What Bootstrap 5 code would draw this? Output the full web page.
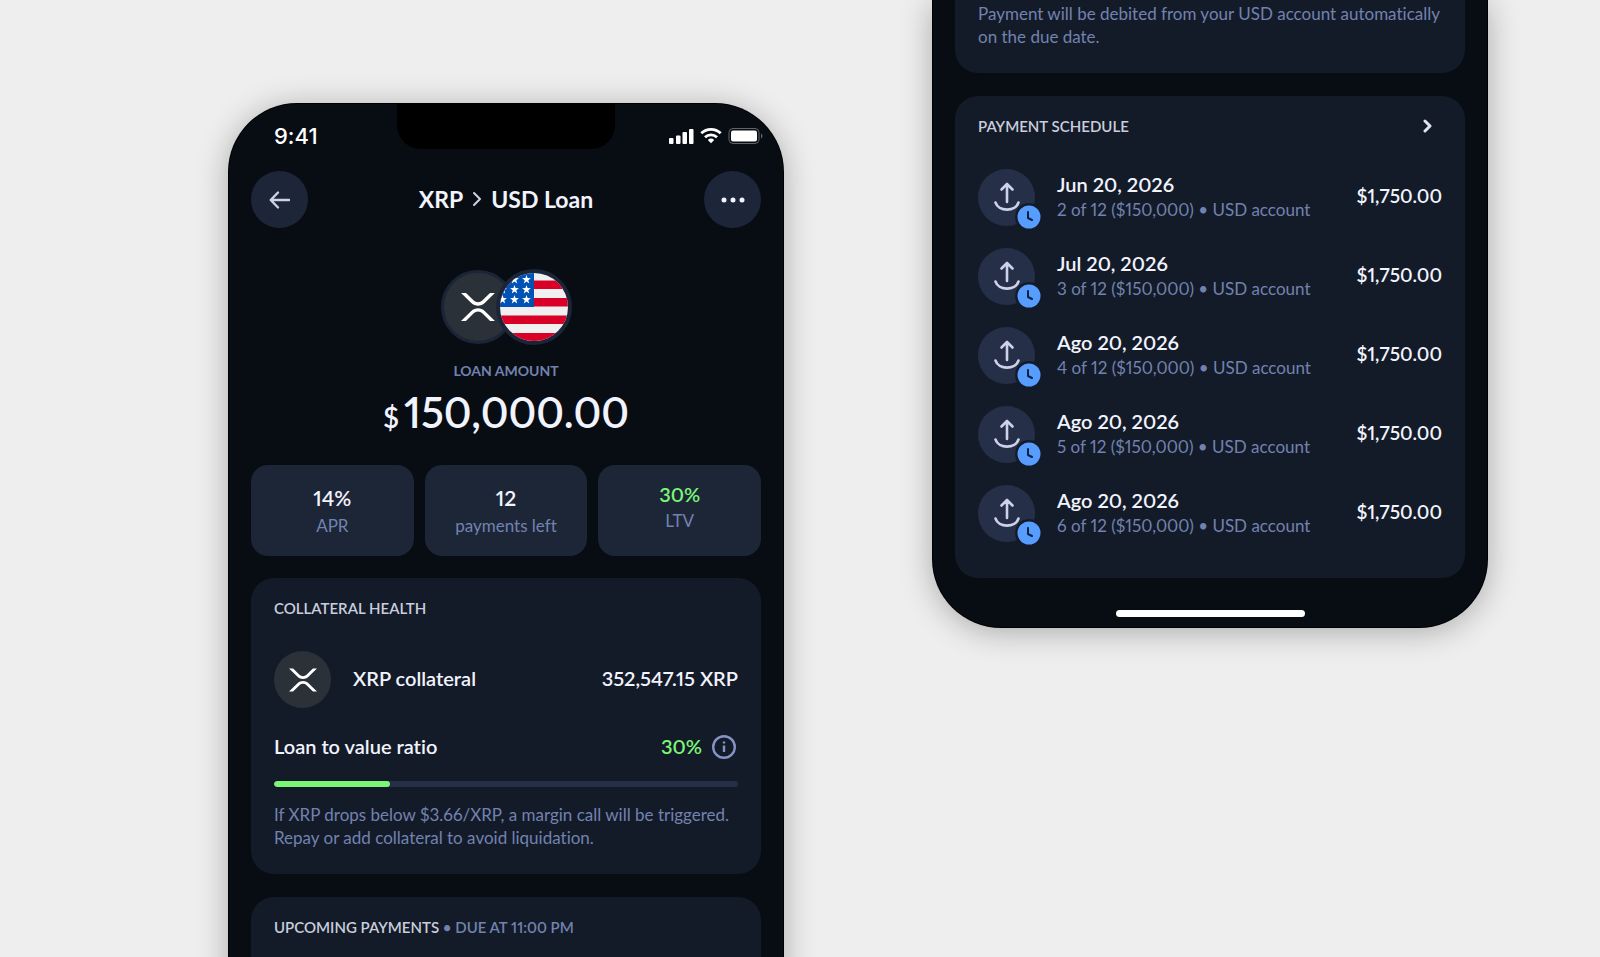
<!DOCTYPE html>
<html lang="en">
<head>
<meta charset="utf-8">
<meta name="viewport" content="width=device-width, initial-scale=1">
<title>XRP &gt; USD Loan</title>
<link href="https://cdn.jsdelivr.net/npm/bootstrap@5.3.0/dist/css/bootstrap.min.css" rel="stylesheet">
<style>
  :root { --ink:#f1f3fd; --soft:#c9cede; --muted:#7282b0; --green:#7cf578; --screen:#080d14; --panel:#141b28; --tile:#1d2637; --disc:#262f48; }
  body { background:#eee; font-family:Lato,"Liberation Sans",sans-serif; color:var(--ink); font-size:20px; line-height:24px; font-weight:600; font-variant-ligatures:none; font-variant-numeric:proportional-nums; }
  .stage { display:grid; grid-template-columns:229fr 554fr 150fr 554fr 113fr; height:100vh; overflow:hidden; }
  .phone { background:var(--screen); box-shadow:0 0 0 1px #000, 0 4px 32px rgba(0,0,0,.3); padding:0 22px; }
  .phone-a { grid-column:2; margin-top:104px; border-radius:68px 68px 0 0; min-height:1200px; }
  .phone-b { grid-column:4; align-self:start; border-radius:0 0 68px 68px; padding-bottom:10px; }
  .status { height:67px; padding:0 0 3px 23px; position:relative; }
  .signals { margin-right:-3px; }
  .clock { font-family:Inter,sans-serif; font-size:22px; font-weight:500; color:#fff; }
  .notch { position:absolute; top:0; left:50%; transform:translateX(-50%); height:45px; width:218px; background:#000; border-radius:0 0 24px 24px; }
  .round-btn { width:57px; height:57px; border:0; border-radius:50%; background:#1d2538; padding:0; display:grid; place-items:center; }
  .page-title { font-size:23px; font-weight:700; margin:0; line-height:28px; padding-bottom:2px; }
  .coins { margin-top:41px; height:76px; }
  .coin { border-radius:50%; display:grid; place-items:center; background:#2a3138; }
  .coin-lg { width:74px; height:74px; border:3px solid #1c2538; }
  .coin-flag { width:76px; height:76px; margin-left:-19px; border-width:4px; position:relative; }
  .coin-sm { width:57px; height:57px; }
  .eyebrow { font-size:15px; line-height:20px; font-weight:600; color:var(--soft); margin:0; text-transform:uppercase; }
  .eyebrow.dim { font-size:14px; font-weight:700; }
  .dim { color:var(--muted); }
  .amount { font-size:42px; line-height:56px; margin-top:3px; }
  .amount small { font-size:28px; margin-right:5px; }
  .stats { gap:11px; margin-top:20px; }
  .stat { background:var(--tile); border-radius:17px; height:91px; flex:1 1 0; text-align:center; padding-top:19px; }
  .stat b { display:block; font-size:21px; font-weight:600; line-height:28px; }
  .stat span { font-size:17px; line-height:27px; font-weight:400; color:var(--muted); display:block; }
  .stat-up { padding-top:15px; }
  .stat-up span { line-height:25px; }
  .green, .stat-up b { color:var(--green); }
  .stat-up b { font-size:20px; }
  .panel { background:var(--panel); border-radius:23px; padding:20px 23px 25px; margin-top:23px; }
  .stats + .panel { margin-top:22px; }
  .panel-cut { padding-top:2px; margin-top:0; }
  .note { font-size:17px; line-height:23px; font-weight:400; color:var(--muted); margin:0; }
  .line { display:flex; align-items:center; margin-top:26px; }
  .line > span { padding-bottom:2px; }
  .line-asset { margin-top:33px; gap:22px; }
  .line-asset > span { padding-bottom:4px; }
  .progress.ltv { height:6px; background:var(--disc); border-radius:3px; margin:21px 0 16px; }
  .ltv .progress-bar { background:var(--green); border-radius:3px; }
  .icon-btn { border:0; background:none; padding:0; display:flex; }
  .schedule { margin-top:22px; }
  .pay { display:flex; align-items:center; height:79px; gap:22px; }
  .pay > div:nth-child(2), .pay > span { padding-bottom:4px; }
  .pay > div:nth-child(2) > div { line-height:27px; }
  .pay > span { font-size:19px; }
  .disc { width:57px; height:57px; border-radius:50%; background:var(--disc); position:relative; display:grid; place-items:center; }
  .due { position:absolute; right:-8px; bottom:-5px; }
  .home-bar { width:189px; height:7px; border-radius:4px; background:#fff; margin:32px auto 0; }
</style>
</head>
<body>
<svg width="0" height="0" class="position-absolute" aria-hidden="true">
  <symbol id="xrp" viewBox="0 0 512 424"><path fill="#fff" d="M437 0h74L357 152.480c-55.770 55.190-146.190 55.190-202 0L.94 0H75l117 115.830a91.110 91.110 0 0 0 127.910 0ZM74.050 424H0l155-153.420c55.770-55.190 146.190-55.190 202 0L512 424h-74L320 307.230a91.110 91.110 0 0 0-127.910 0Z"/></symbol>
  <symbol id="star" viewBox="0 0 24 24"><path fill="#fff" d="M12 0l2.900 8.300 9 .2-7.200 5.400 2.600 8.600L12 17.400l-7.300 5.100 2.600-8.600L.1 8.500l9-.2z"/></symbol>
  <symbol id="send" viewBox="0 0 30 32"><g fill="none" stroke="#cdd2ea" stroke-width="2.600" stroke-linecap="round" stroke-linejoin="round"><path d="M15 20V2M9.500 7.500 15 2 20.500 7.500"/><path d="M3.500 20.500c3 9.500 20 9.500 23 0"/></g></symbol>
  <symbol id="clock" viewBox="0 0 28 28"><circle cx="14" cy="14" r="14" fill="#141b28"/><circle cx="14" cy="14" r="11.500" fill="#579dff"/><path d="M13 9v6l4 2" fill="none" stroke="#10203f" stroke-width="2" stroke-linecap="round" stroke-linejoin="round"/></symbol>
</svg>
<main class="stage">
  <section class="phone phone-a">
    <div class="status d-flex align-items-center justify-content-between">
      <span class="clock">9:41</span>
      <div class="notch"></div>
      <svg class="signals" width="95" height="18" viewBox="0 0 95 18" aria-hidden="true">
        <g fill="#fff"><rect x="0" y="11" width="4.500" height="6" rx="1"/><rect x="7" y="8.500" width="4.500" height="8.500" rx="1"/><rect x="13.500" y="5" width="4.500" height="12" rx="1"/><rect x="20" y="2" width="4.500" height="15" rx="1"/></g>
        <g fill="none" stroke="#fff" stroke-width="2.800"><path d="M32.300 6.300a14 14 0 0 1 19.400 0"/><path d="M36 10.200a8.700 8.700 0 0 1 12 0"/></g><path d="M38.800 12.900a4.800 4.800 0 0 1 6.400 0L42 16.200z" fill="#fff"/>
        <rect x="60" y="1.500" width="30" height="15" rx="4" fill="none" stroke="#62666c"/><rect x="62" y="3.500" width="26" height="11" rx="2" fill="#fff"/><path d="M92 6.500c2 1 2 4 0 5z" fill="#62666c"/>
      </svg>
    </div>
    <header class="d-flex align-items-center justify-content-between">
      <button class="round-btn" type="button" aria-label="Back"><svg width="22" height="20" viewBox="0 0 22 20" fill="none" stroke="#cdd2ea" stroke-width="2.400" stroke-linecap="round" stroke-linejoin="round"><path d="M20 10H2M9 2.500 1.700 10 9 17.500"/></svg></button>
      <h1 class="page-title d-flex align-items-center gap-2">XRP <svg width="12" height="16" viewBox="0 0 12 16" fill="none" stroke="#cdd2ea" stroke-width="2" stroke-linecap="round" stroke-linejoin="round"><path d="m3 2 6 6-6 6"/></svg> USD Loan</h1>
      <button class="round-btn" type="button" aria-label="More"><svg width="24" height="6" viewBox="0 0 24 6" fill="#f1f3fd"><circle cx="3" cy="3" r="2.500"/><circle cx="12" cy="3" r="2.500"/><circle cx="21" cy="3" r="2.500"/></svg></button>
    </header>
    <div class="coins d-flex justify-content-center align-items-center">
      <div class="coin coin-lg"><svg width="34" height="30"><use href="#xrp"/></svg></div>
      <div class="coin coin-lg coin-flag"><svg width="68" height="68" viewBox="0 0 68 68">
        <clipPath id="disc"><circle cx="34" cy="34" r="34"/></clipPath>
        <g clip-path="url(#disc)"><path fill="#f0f0f0" d="M0 0h68v68H0z"/><path fill="#d80027" d="M0 7.500h68v8.500H0zM0 25h68v8.500H0zM0 42.500h68V51H0zM0 60h68v8H0z"/><path fill="#0052b4" d="M0 0h34v34H0z"/>
        <use href="#star" x="10" y="2" width="9" height="9"/><use href="#star" x="22" y="2" width="9" height="9"/><use href="#star" x="-2" y="12" width="9" height="9"/><use href="#star" x="10" y="12" width="9" height="9"/><use href="#star" x="22" y="12" width="9" height="9"/><use href="#star" x="-2" y="22" width="9" height="9"/><use href="#star" x="10" y="22" width="9" height="9"/><use href="#star" x="22" y="22" width="9" height="9"/></g></svg></div>
    </div>
    <div class="text-center">
      <p class="eyebrow dim mt-3">Loan amount</p>
      <div class="amount"><small>$</small>150,000.00</div>
    </div>
    <div class="stats d-flex">
      <div class="stat"><b>14%</b><span>APR</span></div>
      <div class="stat"><b>12</b><span>payments left</span></div>
      <div class="stat stat-up"><b>30%</b><span>LTV</span></div>
    </div>
    <section class="panel">
      <h2 class="eyebrow">Collateral health</h2>
      <div class="line line-asset">
        <div class="coin coin-sm"><svg width="28" height="24"><use href="#xrp"/></svg></div>
        <span>XRP collateral</span><span class="ms-auto">352,547.15 XRP</span>
      </div>
      <div class="line">
        <span>Loan to value ratio</span><span class="ms-auto green">30%</span>
        <button class="icon-btn ms-2" type="button" aria-label="About the ratio"><svg width="28" height="24" viewBox="0 0 28 24" fill="none" stroke="#8593c4" stroke-width="2.400"><circle cx="14" cy="12" r="10.800"/><path d="M14 10.500V17M14 6.500v2"/></svg></button>
      </div>
      <div class="progress ltv" role="progressbar" aria-label="Loan to value" aria-valuenow="25" aria-valuemin="0" aria-valuemax="100"><div class="progress-bar" style="width:25%"></div></div>
      <p class="note">If XRP drops below $3.66/XRP, a margin call will be triggered. Repay or add collateral to avoid liquidation.</p>
    </section>
    <section class="panel pb-5">
      <h2 class="eyebrow">Upcoming payments <span class="dim">• Due at 11:00 PM</span></h2>
    </section>
  </section>

  <section class="phone phone-b">
    <section class="panel panel-cut rounded-top-0">
      <p class="note">Payment will be debited from your USD account automatically on the due date.</p>
    </section>
    <section class="panel">
      <div class="d-flex align-items-center justify-content-between"><h2 class="eyebrow">Payment schedule</h2>
        <button class="icon-btn pe-2" type="button" aria-label="Open schedule"><svg width="12" height="14" viewBox="0 0 12 14" fill="none" stroke="#dfe3f2" stroke-width="3" stroke-linecap="round" stroke-linejoin="round"><path d="m3 2 5 5-5 5"/></svg></button></div>
      <div class="schedule">
        <div class="pay"><div class="disc"><svg width="30" height="32"><use href="#send"/></svg><svg class="due" width="28" height="28"><use href="#clock"/></svg></div><div><div>Jun 20, 2026</div><p class="note">2 of 12 ($150,000) • USD account</p></div><span class="ms-auto">$1,750.00</span></div>
        <div class="pay"><div class="disc"><svg width="30" height="32"><use href="#send"/></svg><svg class="due" width="28" height="28"><use href="#clock"/></svg></div><div><div>Jul 20, 2026</div><p class="note">3 of 12 ($150,000) • USD account</p></div><span class="ms-auto">$1,750.00</span></div>
        <div class="pay"><div class="disc"><svg width="30" height="32"><use href="#send"/></svg><svg class="due" width="28" height="28"><use href="#clock"/></svg></div><div><div>Ago 20, 2026</div><p class="note">4 of 12 ($150,000) • USD account</p></div><span class="ms-auto">$1,750.00</span></div>
        <div class="pay"><div class="disc"><svg width="30" height="32"><use href="#send"/></svg><svg class="due" width="28" height="28"><use href="#clock"/></svg></div><div><div>Ago 20, 2026</div><p class="note">5 of 12 ($150,000) • USD account</p></div><span class="ms-auto">$1,750.00</span></div>
        <div class="pay"><div class="disc"><svg width="30" height="32"><use href="#send"/></svg><svg class="due" width="28" height="28"><use href="#clock"/></svg></div><div><div>Ago 20, 2026</div><p class="note">6 of 12 ($150,000) • USD account</p></div><span class="ms-auto">$1,750.00</span></div>
      </div>
    </section>
    <div class="home-bar"></div>
  </section>
</main>
<script src="https://cdn.jsdelivr.net/npm/bootstrap@5.3.0/dist/js/bootstrap.bundle.min.js"></script>
</body>
</html>
